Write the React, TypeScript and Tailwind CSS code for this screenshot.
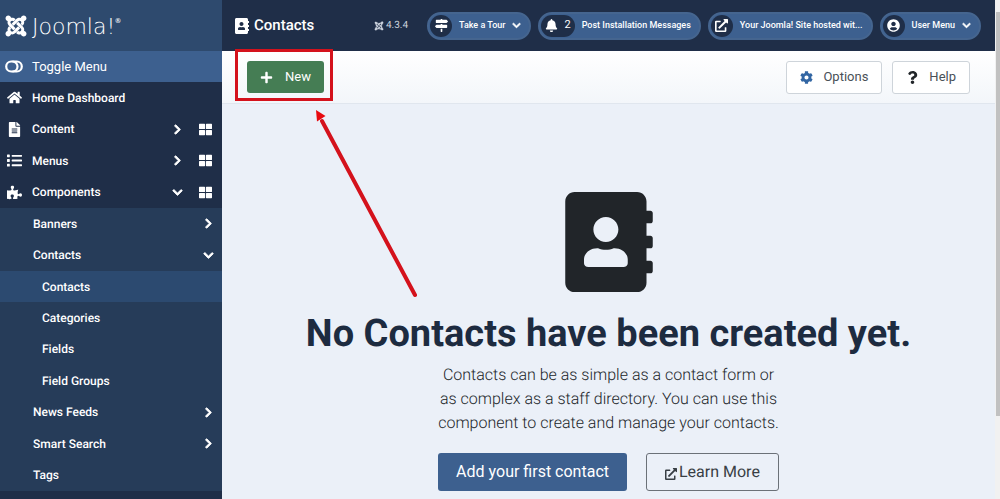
import type { ReactNode } from "react";
import {
  FaAddressBook,
  FaBell,
  FaChevronDown,
  FaChevronRight,
  FaCog,
  FaExternalLinkAlt,
  FaFileAlt,
  FaHome,
  FaJoomla,
  FaList,
  FaMapSigns,
  FaPlus,
  FaPuzzlePiece,
  FaQuestion,
  FaThLarge,
  FaUserCircle,
} from "react-icons/fa";

function ToggleIcon() {
  return (
    <svg viewBox="0 0 18 13" className="h-[13px] w-[18px]" fill="none" stroke="currentColor" strokeWidth="2.200" aria-hidden="true">
      <rect x="1.200" y="1.500" width="15.600" height="10" rx="5" />
      <path d="M7.500 1.500a5 5 0 0 1 0 10" />
    </svg>
  );
}

function Chevron({ open }: { open?: boolean }) {
  return open ? <FaChevronDown className="[stroke-width:40]" /> : <FaChevronRight className="[stroke-width:40]" />;
}

type MainItemProps = { icon: ReactNode; label: string; open?: boolean; expandable?: boolean };

function MainItem({ icon, label, open, expandable }: MainItemProps) {
  return (
    <li className="flex items-center pr-2.5 pl-1">
      <a href="#" className="flex flex-1 items-center gap-2">
        <span className="flex w-5 justify-center text-[15px]">{icon}</span>
        {label}
      </a>
      {expandable && (
        <>
          <button type="button" aria-label={"Expand " + label} className="flex w-5 justify-center text-[11px]">
            <Chevron open={open} />
          </button>
          <a href="#" aria-label={label + " dashboard"} className="ml-3 text-[13px]">
            <FaThLarge />
          </a>
        </>
      )}
    </li>
  );
}

function SubItem({ label, open, expandable }: { label: string; open?: boolean; expandable?: boolean }) {
  return (
    <a href="#" className="flex h-full items-center justify-between pr-2 pl-[33px]">
      {label}
      {expandable && (
        <span className="text-[11px]">
          <Chevron open={open} />
        </span>
      )}
    </a>
  );
}

function Sidebar() {
  return (
    <aside className="w-[222px] shrink-0 bg-[#1f2e48] text-[12px] font-medium text-white">
      <a href="#" aria-label="Joomla!" className="flex h-[51px] items-center gap-1 bg-[#2e4a6e] pl-1">
        <FaJoomla className="size-6" />
        <span className="pt-1 font-['DejaVu_Sans',sans-serif] text-[22px] font-extralight">
          Joomla!
        </span>
        <span className="-ml-1 self-start pt-4 text-[7px]">®</span>
      </a>
      <button type="button" className="flex h-[31px] w-full items-center gap-2 bg-[#3d608f] pl-1 text-[13px] font-normal">
        <span className="flex w-5 justify-center">
          <ToggleIcon />
        </span>
        Toggle Menu
      </button>
      <nav>
        <ul className="grid min-h-[126px] auto-rows-fr">
          <MainItem icon={<FaHome />} label="Home Dashboard" />
          <MainItem icon={<FaFileAlt />} label="Content" expandable />
          <MainItem icon={<FaList />} label="Menus" expandable />
          <MainItem icon={<FaPuzzlePiece />} label="Components" expandable open />
        </ul>
        <ul className="grid min-h-[283px] auto-rows-fr bg-[#263c59]">
          <li>
            <SubItem label="Banners" expandable />
          </li>
          <li className="row-span-5 grid auto-rows-fr">
            <SubItem label="Contacts" expandable open />
            <a href="#" className="flex items-center bg-[#2c4a70] pl-[42px]">Contacts</a>
            <a href="#" className="flex items-center pl-[42px]">Categories</a>
            <a href="#" className="flex items-center pl-[42px]">Fields</a>
            <a href="#" className="flex items-center pl-[42px]">Field Groups</a>
          </li>
          <li>
            <SubItem label="News Feeds" expandable />
          </li>
          <li>
            <SubItem label="Smart Search" expandable />
          </li>
          <li>
            <SubItem label="Tags" />
          </li>
        </ul>
      </nav>
    </aside>
  );
}

function Pill({ icon, label, menu, count }: { icon: ReactNode; label: string; menu?: boolean; count?: number }) {
  return (
    <button
      type="button"
      className="flex h-7 items-center gap-[7px] rounded-full border-2 border-[#45658f] bg-[#3d608f] pr-2 pl-px text-[9px] font-medium whitespace-nowrap"
    >
      <span className="flex h-[22px] min-w-[22px] items-center justify-center gap-1.5 rounded-full bg-[#1f2e48] px-1 text-[13px]">
        {icon}
        {count !== undefined && <span className="text-[11px] font-normal">{count}</span>}
      </span>
      {label}
      {menu && (
        <span className="text-[9px]">
          <Chevron open />
        </span>
      )}
    </button>
  );
}

function TopBar() {
  return (
    <header className="flex h-[51px] shrink-0 items-center bg-[#1f2e48] pr-[14px] pl-3 text-white">
      <FaAddressBook className="shrink-0 text-base" />
      <h1 className="ml-1 text-[15px] font-medium">Contacts</h1>
      <div className="ml-auto flex items-center gap-[7px]">
        <span className="mr-3 flex items-center gap-0.5 text-[10px] text-[#ccd3de]">
          <FaJoomla className="text-[10px]" />
          4.3.4
        </span>
        <Pill icon={<FaMapSigns />} label="Take a Tour" menu />
        <Pill icon={<FaBell />} label="Post Installation Messages" count={2} />
        <Pill icon={<FaExternalLinkAlt />} label="Your Joomla! Site hosted wit..." />
        <Pill icon={<FaUserCircle />} label="User Menu" menu />
      </div>
    </header>
  );
}

function Toolbar() {
  return (
    <div className="flex h-[53px] shrink-0 items-center border-b border-[#e0e6ee] bg-linear-to-b from-white to-[#f3f6fa] pr-[25px] pl-[25px] text-[13px]">
      <div className="relative">
        <button type="button" className="flex h-8 items-center gap-3 rounded-[3px] bg-[#457d54] px-[13px] text-white">
          <FaPlus className="text-[13px]" />
          New
        </button>
        <span className="pointer-events-none absolute -top-3 -right-[9px] -bottom-2 -left-3 border-[3px] border-[#d4121c]" />
        <svg
          viewBox="0 0 104 188"
          className="pointer-events-none absolute top-[49px] left-[67px] h-[188px] w-[104px]"
          aria-hidden="true"
        >
          <path d="M8 11 101 185" stroke="#d4121c" strokeWidth="4" strokeLinecap="round" />
          <path d="M2 0 11.500 6 3 11.500Z" fill="#e8090f" />
        </svg>
      </div>
      <div className="ml-auto flex gap-2.5 text-[#495057]">
        <button type="button" className="flex h-[33px] items-center gap-2.5 rounded-[3px] border border-[#ced4da] bg-white px-[13px]">
          <FaCog className="text-[#3266a3]" />
          Options
        </button>
        <button type="button" className="flex h-[33px] items-center gap-2.5 rounded-[3px] border border-[#ced4da] bg-white px-[13px]">
          <FaQuestion className="text-[#212529]" />
          Help
        </button>
      </div>
    </div>
  );
}

function EmptyState() {
  return (
    <main className="flex flex-1 flex-col items-center pt-[88px] text-center">
      <FaAddressBook className="size-[100px] shrink-0 text-[#212529]" />
      <h2 className="mt-[17px] text-[38px] leading-[50px] font-bold text-[#1d2b40]">No Contacts have been created yet.</h2>
      <p className="mt-1 w-[350px] text-[16px] leading-6 font-light text-[#212529]">
        Contacts can be as simple as a contact form or as complex as a staff directory. You can use this component to
        create and manage your contacts.
      </p>
      <div className="mt-[18px] flex gap-[19px] text-base">
        <button type="button" className="h-[38px] rounded-[3px] bg-[#3d608f] px-[18px] text-white">
          Add your first contact
        </button>
        <a href="#" className="flex h-[38px] items-center gap-0.5 rounded-[3px] border border-[#6b7178] px-[18px] text-[#383e44]">
          <FaExternalLinkAlt className="mt-1 text-xs" />
          Learn More
        </a>
      </div>
    </main>
  );
}

export default function App() {
  return (
    <div className="flex h-screen overflow-hidden bg-[#ebf0f8] font-[Roboto,sans-serif] [text-rendering:geometricPrecision]">
      <Sidebar />
      <div className="flex min-w-0 flex-1 flex-col">
        <TopBar />
        <Toolbar />
        <EmptyState />
      </div>
      <div className="flex w-[5px] shrink-0 flex-col bg-[#f1f1f1] pt-3 pl-px">
        <span className="h-[83%] bg-[#c1c1c1]" />
      </div>
    </div>
  );
}
